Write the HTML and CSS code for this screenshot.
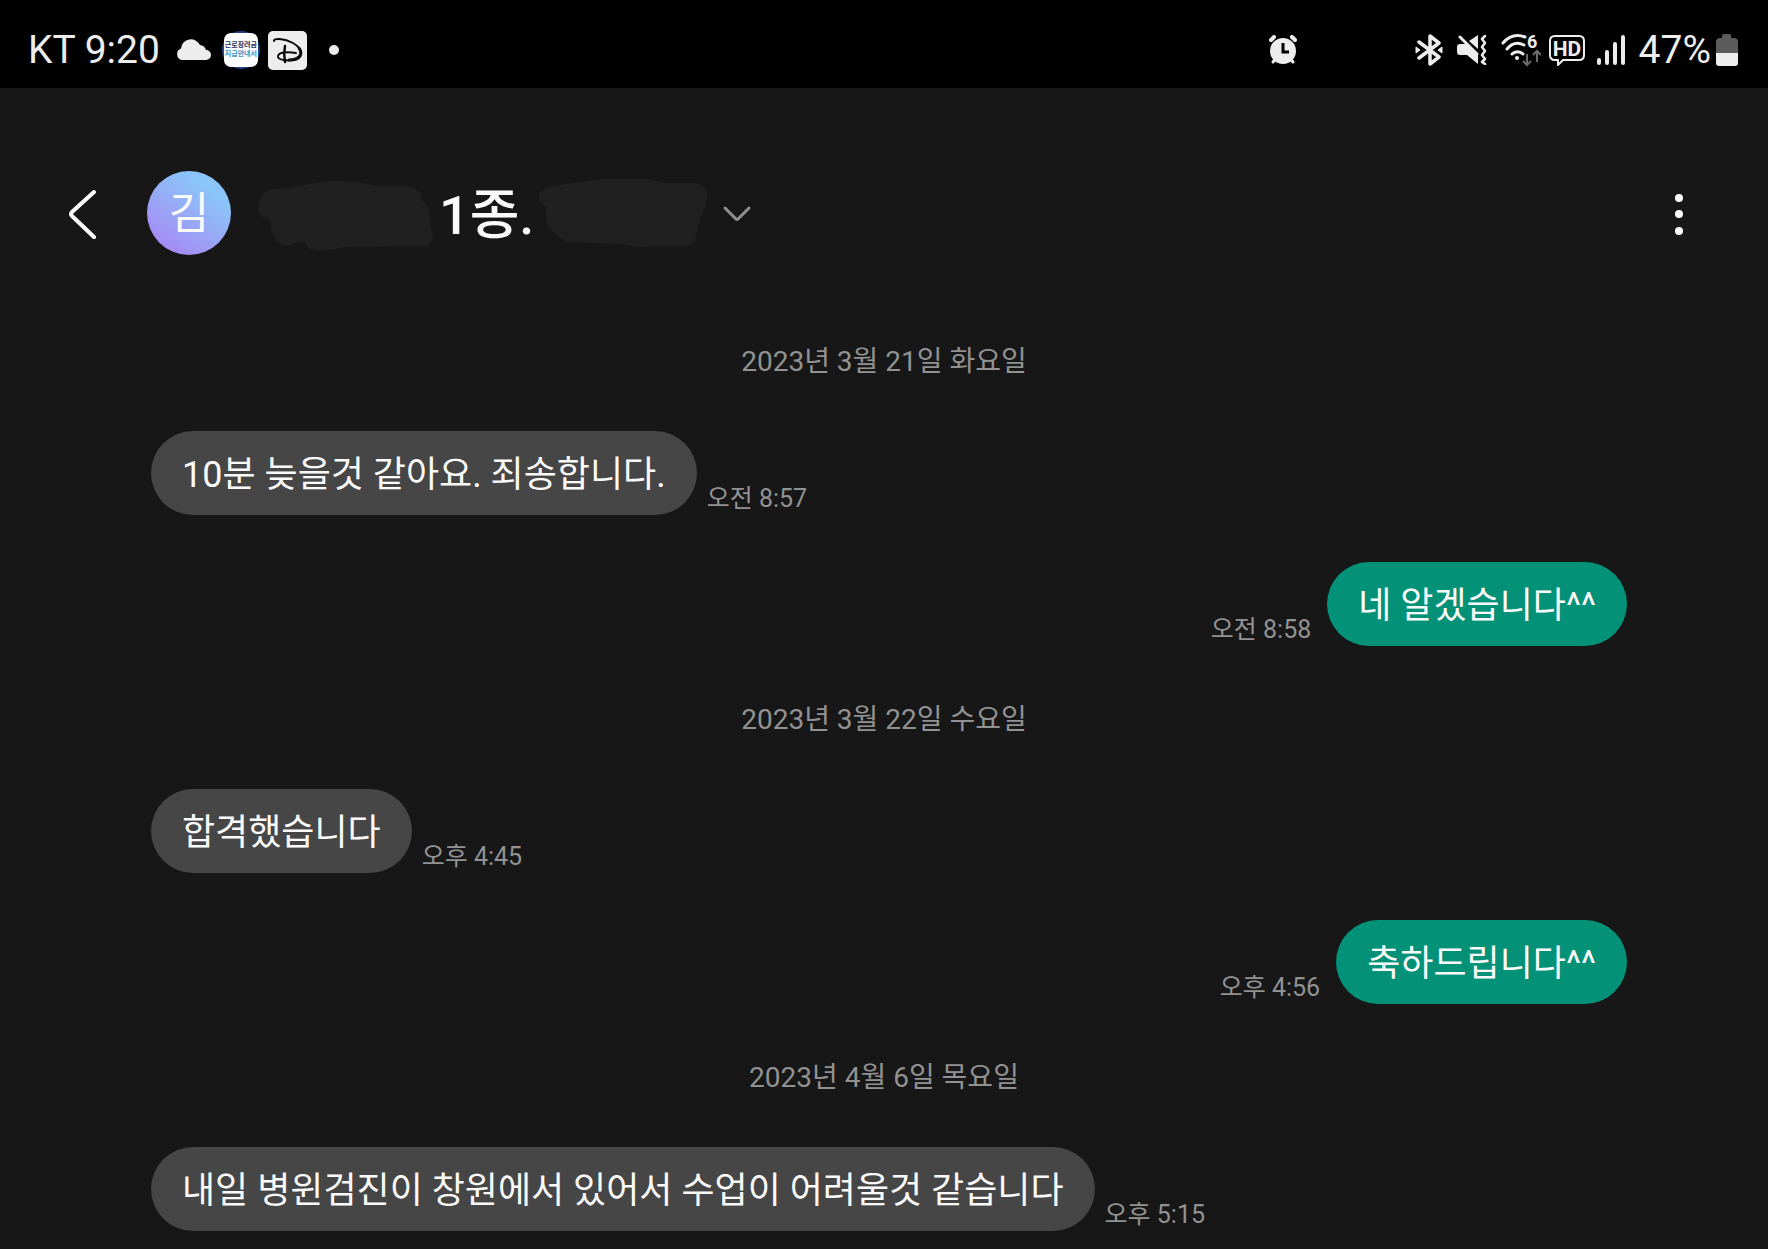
FILE: index.html
```html
<!doctype html>
<html lang="ko">
<head>
    <meta charset="UTF-8">
    <meta name="viewport" content="width=device-width, initial-scale=1.0">
    <title>메시지</title>
    <link rel="stylesheet" href="styles.css">
</head>
<body>
    <div class="status-bar">
        <div class="status-left">
            <span class="status-text">KT 9:20</span>
            <svg class="icon-cloud" width="36" height="22" viewBox="0 0 36 22"><path d="M6 21a6 6 0 0 1-1-11.500A10 10 0 0 1 24 6a7 7 0 0 1 6 5 5 5 0 0 1 0 10z" fill="#ededed"/></svg>
            <span class="notice-app"><span class="notice-face"><span class="notice-dark">근로장려금</span><span class="notice-blue">지급안내서</span></span></span>
            <svg class="icon-disney" width="39" height="39" viewBox="0 0 39 39">
                <rect width="39" height="39" rx="5" fill="#ededed"/>
                <g fill="none" stroke="#0b0b0b" stroke-linecap="round">
                    <path d="M6 10C5 7 16 7 25 12c10 6 11 15 1 17-7 1-15 0-16-3-1-4 7-6 18-4" stroke-width="2"/>
                    <path d="M31 17c5 7-1 12-10 12" stroke-width="3"/>
                    <path d="M17 15c-1 5-1 11 0 16" stroke-width="2.500"/>
                </g>
            </svg>
            <span class="more-dot"></span>
        </div>
        <div class="status-right">
            <svg class="icon-alarm" width="30" height="30" viewBox="0 0 30 30">
                <g stroke="#ededed" stroke-width="4" stroke-linecap="round"><path d="M3 5l3-3M27 5l-3-3"/><path d="M5 27l4-5M25 27l-4-5" stroke-width="3"/></g>
                <circle cx="15" cy="16" r="13" fill="#ededed"/>
                <path d="M15 8v9h6" fill="none" stroke="#000" stroke-width="3"/>
            </svg>
            <svg width="28" height="32" viewBox="0 0 28 32">
                <path d="M4 8l20 15-9 7V2l9 7L4 24" fill="none" stroke="#ededed" stroke-width="3.500" stroke-linecap="round" stroke-linejoin="round"/>
                <path d="M1 13l4 3-4 3zM27 13l-4 3 4 3z" fill="#ededed" stroke="#ededed" stroke-linejoin="round"/>
            </svg>
            <svg width="30" height="30" viewBox="0 0 30 30">
                <path d="M3 9h7l11 11v9L10 20H3q-3 0-3-3v-5q0-3 3-3zM12 6l9-6v14z" fill="#ededed"/>
                <path d="M3 2l17 17" stroke="#ededed" stroke-width="3" stroke-linecap="round"/>
                <path d="M28 1l-3 3 3 4-3 4 3 4-3 4 3 4-3 3 3 2" fill="none" stroke="#ededed" stroke-width="2.500" stroke-linecap="round" stroke-linejoin="round"/>
            </svg>
            <svg width="40" height="40" viewBox="0 -4 40 40">
                <path d="M2 9C8 2 16 0 24 3M6 15c5-6 11-7 17-4M11 20c3-3 8-3 11 0" fill="none" stroke="#ededed" stroke-width="3" stroke-linecap="round"/>
                <circle cx="16" cy="24" r="2" fill="#ededed"/>
                <text class="wifi-label" x="26" y="14">6</text>
                <path d="M26 20v10M22 27l4 4 4-4M36 28V18M32 21l4-4 4 4" fill="none" stroke="#6b6b6b" stroke-width="2"/>
            </svg>
            <svg class="icon-hd" width="36" height="31" viewBox="0 0 36 31">
                <path d="M6 1h24q5 0 5 5v14q0 5-5 5H14l-5 5v-5H6q-5 0-5-5V6q0-5 5-5z" fill="none" stroke="#ededed" stroke-width="2" stroke-linejoin="round"/>
                <text class="hd-label" x="18" y="21" text-anchor="middle">HD</text>
            </svg>
            <svg class="icon-signal" width="28" height="30" viewBox="0 0 28 30"><path d="M2 25v3M10 17v11M18 9v19M26 2v26" stroke="#ededed" stroke-width="4" stroke-linecap="round"/></svg>
            <span class="status-text">47%</span>
            <svg class="icon-battery" width="22" height="32" viewBox="0 0 22 32">
                <path d="M6 4V2q0-2 2-2h5q2 0 2 2v2h3q4 0 4 4v12H0V8q0-4 4-4z" fill="#5c5c5c"/>
                <path d="M0 19h22v10q0 3-3 3H3q-3 0-3-3z" fill="#ededed"/>
            </svg>
        </div>
    </div>

    <header class="header">
        <button class="back" aria-label="뒤로">
            <svg width="30" height="52" viewBox="0 0 30 52"><path d="M26 5L4 25q-2 2 0 4l22 21" fill="none" stroke="#fff" stroke-width="4" stroke-linecap="round"/></svg>
        </button>
        <div class="avatar">김</div>
        <button class="title">
            <svg width="176" height="75" viewBox="0 -5 176 75"><path d="M12 8L32 7Q47 4 61 1Q78-1 101 1L119 5L148 5Q163 6 164 19Q174 27 172 43Q178 55 170 65L87 66Q66 71 57 69Q49 68 47 61H39Q27 69 18 59Q13 50 11 38Q-1 36 0 25Q2 13 12 8Z" fill="#202020"/></svg>
            <h1>1종.</h1>
            <svg width="168" height="69" viewBox="0 0 168 69"><path d="M10 8L33 4Q43 4 54 1Q75-1 111 0L124 4L153 4Q169 5 168 18Q166 33 161 40L157 57Q156 66 147 67L114 67Q99 70 83 65L28 63Q23 61 19 56Q7 50 7 40L7 27Q-1 25 0 16Q2 10 10 8Z" fill="#202020"/></svg>
            <svg class="chevron" width="28" height="18" viewBox="0 0 28 18"><path d="M2 4l11 11q1 1 2 0L26 4" fill="none" stroke="#909090" stroke-width="3" stroke-linecap="round"/></svg>
        </button>
        <button class="menu" aria-label="더보기">
            <svg width="10" height="44" viewBox="0 0 10 44" fill="#fff"><circle cx="5" cy="7" r="4"/><circle cx="5" cy="23" r="4"/><circle cx="5" cy="40" r="4"/></svg>
        </button>
    </header>

    <main class="chat">
        <p class="date">2023년 3월 21일 화요일</p>
        <div class="message">
            <p class="bubble">10분 늦을것 같아요. 죄송합니다.</p>
            <span class="time">오전 8:57</span>
        </div>
        <div class="message sent">
            <p class="bubble">네 알겠습니다^^</p>
            <span class="time">오전 8:58</span>
        </div>
        <p class="date">2023년 3월 22일 수요일</p>
        <div class="message">
            <p class="bubble">합격했습니다</p>
            <span class="time">오후 4:45</span>
        </div>
        <div class="message sent">
            <p class="bubble">축하드립니다^^</p>
            <span class="time">오후 4:56</span>
        </div>
        <p class="date">2023년 4월 6일 목요일</p>
        <div class="message">
            <p class="bubble">내일 병윈검진이 창원에서 있어서 수업이 어려울것 같습니다</p>
            <span class="time">오후 5:15</span>
        </div>
    </main>
</body>
</html>
```
FILE: styles.css
```css
* {
    box-sizing: border-box;
}

body {
    margin: 0;
    min-height: 100vh;
    background-color: #171717;
    color: #fafafa;
    font-family: Roboto, "Noto Sans CJK KR", sans-serif;
}

svg {
    display: block;
    flex-shrink: 0;
}

p,
h1 {
    margin: 0;
}

button {
    padding: 0;
    border: none;
    background: none;
    color: inherit;
    font-family: inherit;
    cursor: pointer;
}

/* Status bar */
.status-bar {
    display: flex;
    justify-content: space-between;
    align-items: center;
    height: 88px;
    padding: 12px 30px 0 28px;
    background-color: #000;
}

.status-left,
.status-right {
    display: flex;
    align-items: center;
}

.status-right {
    gap: 14px;
}

.status-text {
    font-size: 39px;
    line-height: 48px;
    color: #ededed;
}

.icon-cloud {
    margin-left: 16px;
}

.notice-app {
    display: flex;
    align-items: center;
    justify-content: center;
    width: 38px;
    height: 38px;
    margin: 0 8px 0 10px;
    border-radius: 50%;
    background-color: #27408b;
}

.notice-face {
    display: flex;
    flex-direction: column;
    align-items: center;
    justify-content: center;
    width: 34px;
    height: 34px;
    border-radius: 7px;
    background-color: #fff;
    font-size: 7px;
    font-weight: 700;
    line-height: 9px;
    white-space: nowrap;
}

.notice-dark {
    color: #25305c;
}

.notice-blue {
    color: #3a93c8;
}

.more-dot {
    width: 10px;
    height: 10px;
    margin-left: 22px;
    border-radius: 50%;
    background-color: #ededed;
}

.icon-alarm {
    margin-right: 103px;
}

.icon-hd {
    margin: 0 -2px 0 -6px;
}

.wifi-label,
.hd-label {
    font-size: 21px;
    font-weight: 700;
    fill: #ededed;
}

.wifi-label {
    font-size: 18px;
}

.icon-battery {
    margin-left: -9px;
}

/* Conversation header */
.header {
    display: flex;
    align-items: center;
    padding: 83px 84px 33px 68px;
}

.avatar {
    width: 84px;
    height: 84px;
    margin-left: 49px;
    border-radius: 50%;
    background: linear-gradient(215deg, #8bc4f8 25%, #a58cf4 85%);
    font-size: 44px;
    line-height: 86px;
    text-align: center;
}

.title {
    display: flex;
    align-items: center;
    height: 84px;
    margin-left: 27px;
}

.title h1 {
    padding-top: 6px;
    margin: 0 5px;
    font-size: 54px;
    font-weight: 500;
    line-height: 60px;
}

.chevron {
    margin-left: 16px;
}

.menu {
    margin-left: auto;
}

/* Messages */
.chat {
    padding-bottom: 18px;
}

.date {
    padding: 54px 0 49px;
    color: #929292;
    font-size: 28px;
    line-height: 40px;
    text-align: center;
}

.message {
    display: flex;
    align-items: flex-end;
    gap: 10px;
    padding: 0 141px 0 151px;
}

.message.sent {
    flex-direction: row-reverse;
    gap: 16px;
    margin-top: 47px;
}

.bubble {
    padding: 19px 31px 15px;
    border-radius: 42px;
    background-color: #464646;
    font-size: 36px;
    line-height: 50px;
}

.sent .bubble {
    background-color: #039177;
}

.time {
    color: #929292;
    font-size: 25px;
    line-height: 32px;
}
```
